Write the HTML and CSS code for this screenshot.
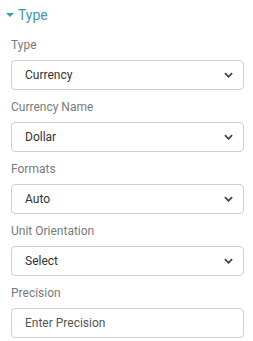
FILE: index.html
```html
<!DOCTYPE html>
<html lang="en">
<head>
<meta charset="UTF-8">
<meta name="viewport" content="width=device-width, initial-scale=1.0">
<title>Type</title>
<link rel="stylesheet" href="styles.css">
</head>
<body>
<div class="panel">
  <div class="section-title"><span class="caret"></span>Type</div>

  <div class="fields">
    <div class="field">
      <div class="label">Type</div>
      <div class="select"><span>Currency</span><svg class="chev" viewBox="0 0 10 6"><path d="M1 1 L5 5 L9 1" /></svg></div>
    </div>
    <div class="field">
      <div class="label">Currency Name</div>
      <div class="select"><span>Dollar</span><svg class="chev" viewBox="0 0 10 6"><path d="M1 1 L5 5 L9 1" /></svg></div>
    </div>
    <div class="field">
      <div class="label">Formats</div>
      <div class="select"><span>Auto</span><svg class="chev" viewBox="0 0 10 6"><path d="M1 1 L5 5 L9 1" /></svg></div>
    </div>
    <div class="field">
      <div class="label">Unit Orientation</div>
      <div class="select"><span>Select</span><svg class="chev" viewBox="0 0 10 6"><path d="M1 1 L5 5 L9 1" /></svg></div>
    </div>
    <div class="field">
      <div class="label">Precision</div>
      <div class="input"><span>Enter Precision</span></div>
    </div>
  </div>
</div>
</body>
</html>
```

FILE: styles.css
```css
body {
  margin: 0;
  background: #fff;
  font-family: Roboto, "Noto Sans", Arial, sans-serif;
}
.panel {
  padding: 6px 9px 0 11px;
}
.section-title {
  display: flex;
  align-items: center;
  height: 18px;
  font-size: 14px;
  color: #3b9cab;
  margin-left: -5px;
}
.caret {
  width: 0;
  height: 0;
  border-left: 4px solid transparent;
  border-right: 4px solid transparent;
  border-top: 4px solid #3b9cab;
  margin-right: 4px;
}
.fields {
  padding-top: 13px;
}
.field {
  margin-bottom: 9px;
}
.label {
  font-size: 12px;
  line-height: 16px;
  color: #7a7a7a;
  margin-bottom: 7px;
}
.select, .input {
  box-sizing: border-box;
  height: 30px;
  border: 1px solid #cfcfcf;
  border-radius: 4px;
  display: flex;
  align-items: center;
  justify-content: space-between;
  padding: 0 10px 0 13px;
  font-size: 12px;
  color: #333;
}
.input {
  color: #555;
}
.chev {
  width: 9px;
  height: 6px;
  fill: none;
  stroke: #444;
  stroke-width: 2;
}
```
